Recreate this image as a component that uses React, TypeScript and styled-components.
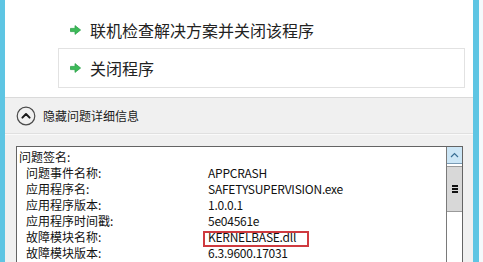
import React from "react";
import styled, { createGlobalStyle } from "styled-components";

const GlobalStyle = createGlobalStyle`
  html, body {
    margin: 0;
    padding: 0;
    background: #ffffff;
    overflow: hidden;
  }
  body {
    font-family: "Noto Sans CJK SC", "Noto Sans", sans-serif;
  }
`;

const Frame = styled.div`
  width: 483px;
  height: 262px;
  display: flex;
  overflow: hidden;
`;

const Edge = styled.div<{ w: number }>`
  width: ${(p) => p.w}px;
  flex-shrink: 0;
  background: #5ec5e3;
`;

const EdgeGap = styled.div`
  width: 4px;
  flex-shrink: 0;
  background: #f4f9fb;
`;

const Body = styled.div`
  flex: 1;
  display: flex;
  flex-direction: column;
`;

const TopPanel = styled.div`
  height: 98px;
  background: #ffffff;
  border-bottom: 1px solid #dadada;
  padding: 8px 8px 0 53px;
  box-sizing: border-box;
  display: flex;
  flex-direction: column;
`;

const Option = styled.div<{ framed?: boolean }>`
  height: 40px;
  display: flex;
  align-items: center;
  gap: 9px;
  padding-left: 11px;
  box-sizing: border-box;
  border: 1px solid ${(p) => (p.framed ? "#e2e2e2" : "transparent")};
  font-size: 16px;
  color: #222;
  padding-top: ${(p) => (p.framed ? "0" : "3px")};
`;

const BottomPanel = styled.div`
  flex: 1;
  background: #f0f0f0;
  display: flex;
  flex-direction: column;
`;

const Toggle = styled.div`
  height: 35px;
  display: flex;
  align-items: center;
  gap: 7px;
  padding-left: 11px;
  border-bottom: 1px solid #e0e0e0;
  box-shadow: 0 1px 0 #fafafa;
  font-size: 12px;
  color: #1a1a1a;
`;

const DetailsBox = styled.div`
  margin: 12px 10px 0 11px;
  flex: 1;
  background: #ffffff;
  border: 1px solid #646464;
  border-bottom: none;
  display: flex;
  overflow: hidden;
`;

const Rows = styled.div`
  flex: 1;
  padding: 2px 0 0 2px;
  font-size: 12px;
  color: #111;
`;

const Row = styled.div<{ indent?: boolean }>`
  height: 16px;
  line-height: 16px;
  display: grid;
  grid-template-columns: 182px 1fr;
  padding-left: ${(p) => (p.indent ? "7px" : "0")};
`;

const Value = styled.span<{ boxed?: boolean }>`
  position: relative;
  white-space: nowrap;
  justify-self: start;
  letter-spacing: -0.25px;
  ${(p) =>
    p.boxed
      ? `
    &::after {
      content: "";
      position: absolute;
      left: -5px;
      top: 2px;
      width: 102px;
      height: 12px;
      border: 2px solid #cf3a3f;
    }
  `
      : ""}
`;

const ScrollBar = styled.div`
  width: 15px;
  border-left: 1px solid #7a7a7a;
  display: flex;
  flex-direction: column;
  background: #ffffff;
`;

const UpButton = styled.div`
  height: 16px;
  background: #cce6f6;
  border-bottom: 1px solid #7a9bb5;
  display: flex;
  align-items: center;
  justify-content: center;
`;

const Thumb = styled.div`
  margin-top: 2px;
  height: 44px;
  background: #d8d8d8;
  border-top: 1px solid #9a9a9a;
  border-bottom: 1px solid #9a9a9a;
  display: flex;
  align-items: center;
  justify-content: center;
`;

const Grip = styled.div`
  width: 6px;
  height: 8px;
  background: repeating-linear-gradient(
    to bottom,
    #111 0px,
    #111 1.6px,
    transparent 1.6px,
    transparent 3px
  );
`;

const GreenArrow = () => (
  <svg width="11" height="10" viewBox="0 0 11 10">
    <path
      d="M0.5 3.4 H5 V0.6 L10.6 5 L5 9.4 V6.6 H0.5 Z"
      fill="#3dbb59"
      stroke="#2fa24b"
      strokeWidth="0.8"
      strokeLinejoin="round"
    />
  </svg>
);

const CircleUp = () => (
  <svg width="20" height="20" viewBox="0 0 20 20">
    <circle cx="10" cy="10" r="8.8" fill="none" stroke="#4a4a4a" strokeWidth="1.2" />
    <path
      d="M6.4 11.6 L10 8 L13.6 11.6"
      fill="none"
      stroke="#1a1a1a"
      strokeWidth="2"
      strokeLinecap="round"
      strokeLinejoin="round"
    />
  </svg>
);

const SmallUp = () => (
  <svg width="9" height="6" viewBox="0 0 9 6">
    <path d="M1 5 L4.5 1.5 L8 5" fill="none" stroke="#3a6f95" strokeWidth="1.2" />
  </svg>
);

const details: [string, string][] = [
  ["问题事件名称:", "APPCRASH"],
  ["应用程序名:", "SAFETYSUPERVISION.exe"],
  ["应用程序版本:", "1.0.0.1"],
  ["应用程序时间戳:", "5e04561e"],
  ["故障模块名称:", "KERNELBASE.dll"],
  ["故障模块版本:", "6.3.9600.17031"],
];

export default function App() {
  return (
    <Frame>
      <GlobalStyle />
      <Edge w={5} />
      <Body>
        <TopPanel>
          <Option>
            <GreenArrow />
            联机检查解决方案并关闭该程序
          </Option>
          <Option framed>
            <GreenArrow />
            关闭程序
          </Option>
        </TopPanel>
        <BottomPanel>
          <Toggle>
            <CircleUp />
            隐藏问题详细信息
          </Toggle>
          <DetailsBox>
            <Rows>
              <Row>
                <span>问题签名:</span>
                <span />
              </Row>
              {details.map(([label, value]) => (
                <Row indent key={label}>
                  <span>{label}</span>
                  <Value boxed={value === "KERNELBASE.dll"}>{value}</Value>
                </Row>
              ))}
            </Rows>
            <ScrollBar>
              <UpButton>
                <SmallUp />
              </UpButton>
              <Thumb>
                <Grip />
              </Thumb>
            </ScrollBar>
          </DetailsBox>
        </BottomPanel>
      </Body>
      <Edge w={6} />
      <EdgeGap />
    </Frame>
  );
}
